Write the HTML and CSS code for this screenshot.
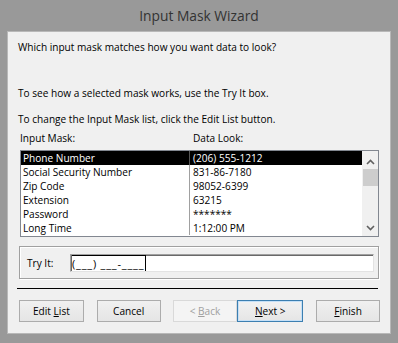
FILE: index.html
```html
<!DOCTYPE html>
<html lang="en">
<head>
    <meta charset="UTF-8">
    <meta name="viewport" content="width=device-width, initial-scale=1.0">
    <title>Input Mask Wizard</title>
    <link rel="stylesheet" href="styles.css">
</head>
<body>
    <div class="window">
        <div class="titlebar">Input Mask Wizard</div>

        <div class="panel">
            <p class="intro">Which input mask matches how you want data to look?</p>
            <p class="hint first">To see how a selected mask works, use the Try It box.</p>
            <p class="hint">To change the Input Mask list, click the Edit List button.</p>

            <div class="col-labels">
                <span class="col-mask">Input Mask:</span>
                <span class="col-look">Data Look:</span>
            </div>

            <!-- Lista de mascaras -->
            <div class="listbox">
                <div class="rows">
                    <div class="row selected"><span class="c1">Phone Number</span><span class="c2">(206) 555-1212</span></div>
                    <div class="row"><span class="c1">Social Security Number</span><span class="c2">831-86-7180</span></div>
                    <div class="row"><span class="c1">Zip Code</span><span class="c2">98052-6399</span></div>
                    <div class="row"><span class="c1">Extension</span><span class="c2">63215</span></div>
                    <div class="row"><span class="c1">Password</span><span class="c2">*******</span></div>
                    <div class="row"><span class="c1">Long Time</span><span class="c2">1:12:00 PM</span></div>
                </div>
                <div class="scrollbar">
                    <svg class="arrow" width="9" height="6" viewBox="0 0 9 6"><path d="M1 5 L4.5 1.5 L8 5" fill="none" stroke="#606060" stroke-width="1.6"/></svg>
                    <div class="thumb"></div>
                    <svg class="arrow down" width="9" height="6" viewBox="0 0 9 6"><path d="M1 1 L4.5 4.5 L8 1" fill="none" stroke="#606060" stroke-width="1.6"/></svg>
                </div>
            </div>

            <!-- Try It -->
            <div class="tryit">
                <label for="tryInput">Try It:</label>
                <div class="tryinput" id="tryInput"><span class="mask">(___) ___-____</span></div>
            </div>

            <div class="separator"></div>

            <div class="buttons">
                <button class="btn edit">Edit <u>L</u>ist</button>
                <button class="btn cancel">Cancel</button>
                <button class="btn back" disabled>&lt; <u>B</u>ack</button>
                <button class="btn next"><u>N</u>ext &gt;</button>
                <button class="btn finish"><u>F</u>inish</button>
            </div>
        </div>
    </div>
</body>
</html>
```

FILE: styles.css
```css
body {
    margin: 0;
    background: #999999;
    font-family: "Open Sans", "Noto Sans", sans-serif;
    font-size: 10.1px;
    color: #000;
}
.window {
    width: 398px;
    height: 343px;
}
.titlebar {
    height: 31px;
    line-height: 32px;
    text-align: center;
    font-size: 13.8px;
    color: #333;
}
.panel {
    margin: 0 7px;
    background: #f0f0f0;
    border: 1px solid #b8b8b8;
    padding: 8px 10px 0 10px;
    box-sizing: border-box;
    height: 303px;
}
p {
    margin: 0;
    line-height: 15px;
}
.hint.first {
    margin-top: 31px;
}
.hint {
    margin-top: 11px;
}
.col-labels {
    display: flex;
    margin-top: 4px;
    line-height: 15px;
    padding-left: 2px;
}
.col-mask {
    width: 173px;
}
.listbox {
    display: flex;
    margin-top: 4px;
    margin-left: 2px;
    width: 359px;
    height: 87px;
    border: 1px solid #828790;
    box-sizing: border-box;
    background: #fff;
}
.rows {
    flex: 1;
}
.row {
    display: flex;
    height: 14px;
    line-height: 14px;
    overflow: hidden;
}
.c1 {
    width: 166px;
    padding-left: 2px;
    border-right: 1px solid #a0a0a0;
    white-space: nowrap;
}
.c2 {
    padding-left: 3px;
}
.row.selected {
    background: #000;
    color: #fff;
}
.row.selected .c1 {
    border-right-color: #555;
}
.scrollbar {
    width: 16px;
    background: #f0f0f0;
    display: flex;
    flex-direction: column;
    align-items: center;
}
.arrow {
    margin-top: 8px;
}
.arrow.down {
    margin-top: auto;
    margin-bottom: 5px;
}
.thumb {
    width: 15px;
    height: 17px;
    margin-top: 4px;
    background: #cdcdcd;
}
.tryit {
    display: flex;
    align-items: center;
    margin-top: 9px;
    margin-left: 1px;
    width: 360px;
    height: 33px;
    box-sizing: border-box;
    border: 1px solid #a0a0a0;
    box-shadow: inset 1px 1px 0 #fff, 1px 1px 0 #fff;
    padding-left: 7px;
}
.tryit label {
    width: 43px;
}
.tryinput {
    width: 304px;
    height: 18px;
    box-sizing: border-box;
    background: #fff;
    border-top: 1px solid #a0a0a0;
    border-left: 1px solid #a0a0a0;
    border-right: 1px solid #e3e3e3;
    border-bottom: 1px solid #e3e3e3;
    box-shadow: inset 1px 1px 0 #696969;
    padding-left: 1px;
    line-height: 16px;
}
.mask {
    display: inline-block;
    border-top: 1px solid #000;
    border-right: 1px solid #000;
    line-height: 15px;
    padding-right: 1px;
    font-size: 11px;
    letter-spacing: 0.8px;
}
.separator {
    margin-top: 9px;
    margin-left: -1px;
    width: 361px;
    height: 1px;
    background: #000;
}
.buttons {
    display: flex;
    margin-top: 11px;
    margin-left: 1px;
}
.btn {
    height: 22px;
    width: 65px;
    padding: 0;
    font-family: inherit;
    font-size: 10.1px;
    color: #000;
    background: linear-gradient(#f0f0f0, #e5e5e5);
    border: 1px solid #acacac;
    border-radius: 0;
}
.cancel {
    margin-left: 13px;
    width: 64px;
}
.back {
    margin-left: 12px;
    color: #a0a0a0;
    border-color: #d9d9d9;
    background: #f4f4f4;
}
.next {
    width: 66px;
    border-color: #3c7fb1;
    box-shadow: inset 0 0 0 1px #c5e0f7;
    background: linear-gradient(#f2f2f2, #e5e5e5);
}
.finish {
    margin-left: 13px;
    width: 64px;
}
```
